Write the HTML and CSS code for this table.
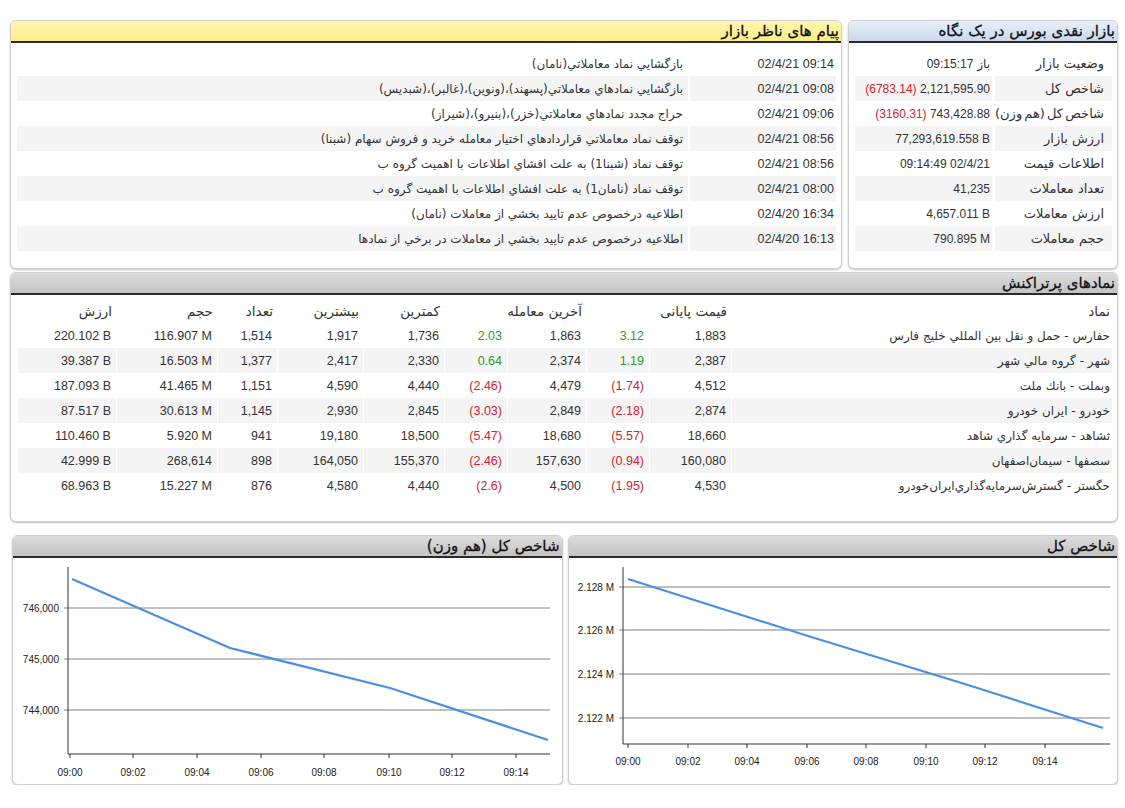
FILE: index.html
```html
<!DOCTYPE html>
<html lang="fa">
<head>
<meta charset="utf-8">
<title>بازار</title>
<link rel="stylesheet" href="styles.css">
</head>
<body>
<div class="page">
  <div class="top-row">
    <section class="panel summary">
      <div class="panel-head blue"><span class="title">بازار نقدی بورس در یک نگاه</span></div>
      <div class="panel-body summary-body">
        <table class="grid sum">
          <colgroup><col class="c-lbl"><col class="c-val"></colgroup>
          <tr><td class="lbl">وضعیت بازار</td><td class="val"><span class="fa">باز</span> <span class="num">09:15:17</span></td></tr>
          <tr class="alt"><td class="lbl">شاخص کل</td><td class="val"><span class="num"><span class="neg">(6783.14)</span> 2,121,595.90</span></td></tr>
          <tr><td class="lbl tight">شاخص کل (هم وزن)</td><td class="val"><span class="num"><span class="neg">(3160.31)</span> 743,428.88</span></td></tr>
          <tr class="alt"><td class="lbl">ارزش بازار</td><td class="val"><span class="num">77,293,619.558 B</span></td></tr>
          <tr><td class="lbl">اطلاعات قیمت</td><td class="val"><span class="num">09:14:49 02/4/21</span></td></tr>
          <tr class="alt"><td class="lbl">تعداد معاملات</td><td class="val"><span class="num">41,235</span></td></tr>
          <tr><td class="lbl">ارزش معاملات</td><td class="val"><span class="num">4,657.011 B</span></td></tr>
          <tr class="alt"><td class="lbl">حجم معاملات</td><td class="val"><span class="num">790.895 M</span></td></tr>
        </table>
      </div>
    </section>
    <section class="panel messages">
      <div class="panel-head yellow"><span class="title">پیام های ناظر بازار</span></div>
      <div class="panel-body msg-body">
        <table class="grid msg">
          <tr><td class="date">02/4/21 09:14</td><td class="text">بازگشايي نماد معاملاتي(نامان)</td></tr>
          <tr class="alt"><td class="date">02/4/21 09:08</td><td class="text">بازگشايي نمادهاي معاملاتي(پسهند)،(ونوين)،(غالبر)،(شبديس)</td></tr>
          <tr><td class="date">02/4/21 09:06</td><td class="text">حراج مجدد نمادهاي معاملاتي(خزر)،(بنيرو)،(شيراز)</td></tr>
          <tr class="alt"><td class="date">02/4/21 08:56</td><td class="text">توقف نماد معاملاتي قراردادهاي اختيار معامله خريد و فروش سهام (شبنا)</td></tr>
          <tr><td class="date">02/4/21 08:56</td><td class="text">توقف نماد (شبنا1) به علت افشاي اطلاعات با اهميت گروه ب</td></tr>
          <tr class="alt"><td class="date">02/4/21 08:00</td><td class="text">توقف نماد (نامان1) به علت افشاي اطلاعات با اهميت گروه ب</td></tr>
          <tr><td class="date">02/4/20 16:34</td><td class="text">اطلاعيه درخصوص عدم تاييد بخشي از معاملات (نامان)</td></tr>
          <tr class="alt"><td class="date">02/4/20 16:13</td><td class="text">اطلاعيه درخصوص عدم تاييد بخشي از معاملات در برخي از نمادها</td></tr>
        </table>
      </div>
    </section>
  </div>

  <section class="panel active">
    <div class="panel-head gray"><span class="title">نمادهای پرتراکنش</span></div>
    <div class="panel-body active-body">
      <table class="grid symbols">
        <colgroup>
          <col class="c-name"><col class="c-price"><col class="c-pct"><col class="c-price2"><col class="c-pct"><col class="c-min"><col class="c-max"><col class="c-cnt"><col class="c-vol"><col class="c-val">
        </colgroup>
        <tr class="hdr">
          <td class="name">نماد</td>
          <td colspan="2">قیمت پایانی</td>
          <td colspan="2">آخرین معامله</td>
          <td>کمترین</td>
          <td>بیشترین</td>
          <td>تعداد</td>
          <td>حجم</td>
          <td>ارزش</td>
        </tr>
        <tr><td class="name">حفارس - حمل و نقل بين المللي خليج فارس</td><td class="n">1,883</td><td class="n pos">3.12</td><td class="n">1,863</td><td class="n pos">2.03</td><td class="n">1,736</td><td class="n">1,917</td><td class="n">1,514</td><td class="n">116.907 M</td><td class="n">220.102 B</td></tr>
        <tr class="alt"><td class="name">شهر - گروه مالي شهر</td><td class="n">2,387</td><td class="n pos">1.19</td><td class="n">2,374</td><td class="n pos">0.64</td><td class="n">2,330</td><td class="n">2,417</td><td class="n">1,377</td><td class="n">16.503 M</td><td class="n">39.387 B</td></tr>
        <tr><td class="name">وبملت - بانك ملت</td><td class="n">4,512</td><td class="n neg">(1.74)</td><td class="n">4,479</td><td class="n neg">(2.46)</td><td class="n">4,440</td><td class="n">4,590</td><td class="n">1,151</td><td class="n">41.465 M</td><td class="n">187.093 B</td></tr>
        <tr class="alt"><td class="name">خودرو - ايران خودرو</td><td class="n">2,874</td><td class="n neg">(2.18)</td><td class="n">2,849</td><td class="n neg">(3.03)</td><td class="n">2,845</td><td class="n">2,930</td><td class="n">1,145</td><td class="n">30.613 M</td><td class="n">87.517 B</td></tr>
        <tr><td class="name">ثشاهد - سرمايه گذاري شاهد</td><td class="n">18,660</td><td class="n neg">(5.57)</td><td class="n">18,680</td><td class="n neg">(5.47)</td><td class="n">18,500</td><td class="n">19,180</td><td class="n">941</td><td class="n">5.920 M</td><td class="n">110.460 B</td></tr>
        <tr class="alt"><td class="name">سصفها - سيمان‌اصفهان</td><td class="n">160,080</td><td class="n neg">(0.94)</td><td class="n">157,630</td><td class="n neg">(2.46)</td><td class="n">155,370</td><td class="n">164,050</td><td class="n">898</td><td class="n">268,614</td><td class="n">42.999 B</td></tr>
        <tr><td class="name">حگستر - گسترش‌سرمايه‌گذاري‌ايران‌خودرو</td><td class="n">4,530</td><td class="n neg">(1.95)</td><td class="n">4,500</td><td class="n neg">(2.6)</td><td class="n">4,440</td><td class="n">4,580</td><td class="n">876</td><td class="n">15.227 M</td><td class="n">68.963 B</td></tr>
      </table>
    </div>
  </section>

  <div class="chart-row">
    <section class="panel chart">
      <div class="panel-head gray"><span class="title">شاخص کل</span></div>
      <div class="chart-body">
        <svg class="plot" viewBox="0 0 549 225" width="549" height="225">
          <g class="gridlines">
            <line x1="51" y1="29" x2="542" y2="29"/>
            <line x1="51" y1="72" x2="542" y2="72"/>
            <line x1="51" y1="116" x2="542" y2="116"/>
            <line x1="51" y1="160" x2="542" y2="160"/>
          </g>
          <g class="axis">
            <line x1="55" y1="9" x2="55" y2="186"/>
            <line x1="55" y1="186" x2="542" y2="186"/>
            <line x1="60" y1="186" x2="60" y2="190"/>
            <line x1="120" y1="186" x2="120" y2="190"/>
            <line x1="179" y1="186" x2="179" y2="190"/>
            <line x1="239" y1="186" x2="239" y2="190"/>
            <line x1="298" y1="186" x2="298" y2="190"/>
            <line x1="358" y1="186" x2="358" y2="190"/>
            <line x1="417" y1="186" x2="417" y2="190"/>
            <line x1="477" y1="186" x2="477" y2="190"/>
          </g>
          <g class="ylab">
            <text x="46" y="33">2.128 M</text>
            <text x="46" y="76">2.126 M</text>
            <text x="46" y="120">2.124 M</text>
            <text x="46" y="164">2.122 M</text>
          </g>
          <g class="xlab">
            <text x="60" y="207">09:00</text>
            <text x="120" y="207">09:02</text>
            <text x="179" y="207">09:04</text>
            <text x="239" y="207">09:06</text>
            <text x="298" y="207">09:08</text>
            <text x="358" y="207">09:10</text>
            <text x="417" y="207">09:12</text>
            <text x="477" y="207">09:14</text>
          </g>
          <polyline class="series" points="60,21 240,78 400,127 535,170"/>
        </svg>
      </div>
    </section>
    <section class="panel chart">
      <div class="panel-head gray"><span class="title">شاخص کل (هم وزن)</span></div>
      <div class="chart-body">
        <svg class="plot" viewBox="0 0 549 225" width="549" height="225">
          <g class="gridlines">
            <line x1="51" y1="50" x2="537" y2="50"/>
            <line x1="51" y1="101" x2="537" y2="101"/>
            <line x1="51" y1="152" x2="537" y2="152"/>
          </g>
          <g class="axis">
            <line x1="55" y1="9" x2="55" y2="196"/>
            <line x1="55" y1="196" x2="537" y2="196"/>
            <line x1="57" y1="196" x2="57" y2="200"/>
            <line x1="120" y1="196" x2="120" y2="200"/>
            <line x1="184" y1="196" x2="184" y2="200"/>
            <line x1="248" y1="196" x2="248" y2="200"/>
            <line x1="311" y1="196" x2="311" y2="200"/>
            <line x1="376" y1="196" x2="376" y2="200"/>
            <line x1="439" y1="196" x2="439" y2="200"/>
            <line x1="503" y1="196" x2="503" y2="200"/>
          </g>
          <g class="ylab">
            <text x="46" y="54">746,000</text>
            <text x="46" y="105">745,000</text>
            <text x="46" y="156">744,000</text>
          </g>
          <g class="xlab">
            <text x="57" y="218">09:00</text>
            <text x="120" y="218">09:02</text>
            <text x="184" y="218">09:04</text>
            <text x="248" y="218">09:06</text>
            <text x="311" y="218">09:08</text>
            <text x="376" y="218">09:10</text>
            <text x="439" y="218">09:12</text>
            <text x="503" y="218">09:14</text>
          </g>
          <polyline class="series" points="59,21 217,90 377,130 535,182"/>
        </svg>
      </div>
    </section>
  </div>
</div>
</body>
</html>
```

FILE: styles.css
```css
html, body {
  margin: 0;
  padding: 0;
  background: #ffffff;
}

body {
  font-family: Tahoma, "DejaVu Sans", sans-serif;
  font-size: 12px;
  color: #333333;
}

.page {
  direction: rtl;
  width: 1108px;
  padding: 20px 7px 0 10px;
}

.top-row {
  display: flex;
  gap: 6px;
  height: 249px;
}

.panel {
  background: #ffffff;
  border: 1px solid #cfcfcf;
  border-radius: 6px;
  box-shadow: 0 1px 2px rgba(0, 0, 0, 0.25);
  overflow: hidden;
  box-sizing: border-box;
}

.summary {
  width: 270px;
  flex: none;
}

.messages {
  flex: 1;
}

.panel-head {
  height: 20px;
  border-bottom: 2px solid #2a2a2a;
  padding-right: 2px;
  line-height: 21px;
  text-align: right;
}

.panel-head .title {
  font-family: Tahoma, "DejaVu Sans", sans-serif;
  font-size: 15px;
  font-weight: normal;
  color: #111111;
  -webkit-text-stroke: 0.3px #111111;
}

.yellow {
  background: linear-gradient(#fef6b0, #fbed8a);
}

.blue {
  background: linear-gradient(#e8eff9, #c9d8ee);
}

.gray {
  background: linear-gradient(#dcdcdc, #c3c3c3);
}

.grid {
  border-collapse: separate;
  border-spacing: 0;
  width: 100%;
}

.grid td {
  height: 25px;
  padding: 0 4px 0 4px;
  white-space: nowrap;
  text-align: right;
}

.grid tr.alt td {
  background: #f4f4f4;
}

.num, .n, .date {
  font-family: "Liberation Sans", Arial, sans-serif;
  font-size: 12.5px;
  direction: ltr;
  unicode-bidi: isolate;
}

.neg {
  color: #d2232f;
}

.pos {
  color: #2f9a2f;
}

/* summary */
.summary-body {
  padding: 8px 5px 0 6px;
}

.sum {
  table-layout: fixed;
}

.sum .c-lbl {
  width: 117px;
}

.sum .lbl {
  padding-right: 8px;
  font-size: 13px;
  overflow: visible;
}

.sum .lbl.tight {
  word-spacing: -2px;
}

.sum .val {
  padding-right: 2px;
  border-right: 3px solid #ffffff;
}

.sum .num {
  font-size: 12px;
}

/* messages */
.msg-body {
  padding: 8px 5px 0 6px;
}

.msg .date {
  width: 140px;
  padding-right: 2px;
}

.msg .text {
  padding-right: 5px;
  border-right: 2px solid #ffffff;
}

/* active symbols */
.active {
  margin-top: 3px;
  height: 250px;
}

.active-body {
  padding: 3px 5px 0 6px;
}

.symbols {
  table-layout: fixed;
}

.symbols .c-name { width: 381px; }
.symbols .c-price { width: 82px; }
.symbols .c-pct { width: 63px; }
.symbols .c-price2 { width: 79px; }
.symbols .c-min { width: 81px; }
.symbols .c-max { width: 86px; }
.symbols .c-cnt { width: 60px; }
.symbols .c-vol { width: 101px; }
.symbols .c-val { width: 99px; }

.symbols td {
  padding-right: 4px;
  border-left: 1px solid #ffffff;
}

.symbols .name {
  padding-right: 2px;
}

.symbols .hdr td {
  font-size: 13.5px;
}

/* charts */
.chart-row {
  display: flex;
  gap: 5px;
  margin-top: 13px;
  padding-left: 2px;
  height: 250px;
}

.chart {
  flex: 1;
}

.chart-body {
  height: 227px;
}

.plot {
  display: block;
  direction: ltr;
}

.gridlines line {
  stroke: #808080;
  stroke-width: 1;
}

.axis line {
  stroke: #333333;
  stroke-width: 1;
}

.ylab text {
  font-family: "Liberation Sans", Arial, sans-serif;
  font-size: 10px;
  fill: #222222;
  text-anchor: end;
}

.xlab text {
  font-family: "Liberation Sans", Arial, sans-serif;
  font-size: 10px;
  fill: #222222;
  text-anchor: middle;
}

.series {
  fill: none;
  stroke: #4a8fe0;
  stroke-width: 2.2;
  stroke-linejoin: round;
}
```
